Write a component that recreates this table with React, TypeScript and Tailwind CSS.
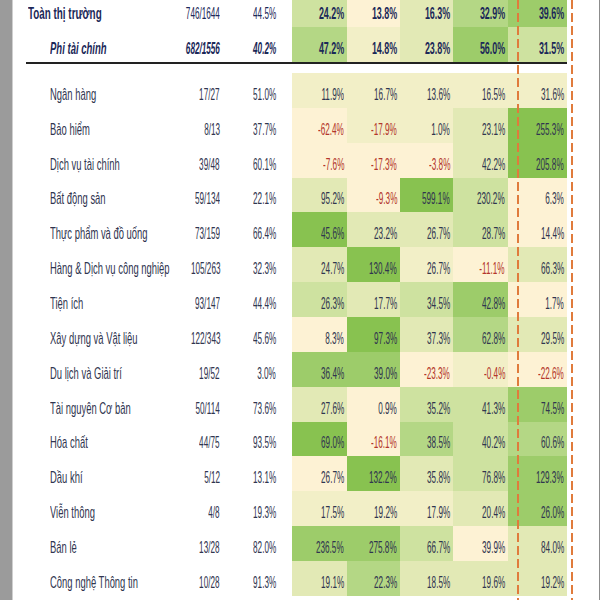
import React from "react";

// green heat-map shades, lightest to darkest
const shade = [
  "bg-[#fdf2d4]",
  "bg-[#f2efc7]",
  "bg-[#e2e9b5]",
  "bg-[#cee2a0]",
  "bg-[#b4d785]",
  "bg-[#9dcc6a]",
  "bg-[#88c250]",
];

type Cell = [string, number];
type Row = { name: string; count: string; pct: string; cells: Cell[] };

const cols = "grid grid-cols-[167px_40px_56px_16px_55px_53px_53px_55px_59px]";

const rows: Row[] = [
  { name: "Ngân hàng", count: "17/27", pct: "51.0%", cells: [["11.9%", 1], ["16.7%", 1], ["13.6%", 1], ["16.5%", 1], ["31.6%", 1]] },
  { name: "Bảo hiểm", count: "8/13", pct: "37.7%", cells: [["-62.4%", 0], ["-17.9%", 1], ["1.0%", 1], ["23.1%", 2], ["255.3%", 6]] },
  { name: "Dịch vụ tài chính", count: "39/48", pct: "60.1%", cells: [["-7.6%", 0], ["-17.3%", 0], ["-3.8%", 0], ["42.2%", 2], ["205.8%", 6]] },
  { name: "Bất động sản", count: "59/134", pct: "22.1%", cells: [["95.2%", 2], ["-9.3%", 0], ["599.1%", 6], ["230.2%", 3], ["6.3%", 0]] },
  { name: "Thực phẩm và đồ uống", count: "73/159", pct: "66.4%", cells: [["45.6%", 6], ["23.2%", 2], ["26.7%", 2], ["28.7%", 3], ["14.4%", 0]] },
  { name: "Hàng & Dịch vụ công nghiệp", count: "105/263", pct: "32.3%", cells: [["24.7%", 2], ["130.4%", 6], ["26.7%", 1], ["-11.1%", 0], ["66.3%", 2]] },
  { name: "Tiện ích", count: "93/147", pct: "44.4%", cells: [["26.3%", 3], ["17.7%", 2], ["34.5%", 3], ["42.8%", 5], ["1.7%", 0]] },
  { name: "Xây dựng và Vật liệu", count: "122/343", pct: "45.6%", cells: [["8.3%", 0], ["97.3%", 6], ["37.3%", 2], ["62.8%", 4], ["29.5%", 2]] },
  { name: "Du lịch và Giải trí", count: "19/52", pct: "3.0%", cells: [["36.4%", 5], ["39.0%", 5], ["-23.3%", 0], ["-0.4%", 1], ["-22.6%", 0]] },
  { name: "Tài nguyên Cơ bản", count: "50/114", pct: "73.6%", cells: [["27.6%", 2], ["0.9%", 0], ["35.2%", 3], ["41.3%", 3], ["74.5%", 5]] },
  { name: "Hóa chất", count: "44/75", pct: "93.5%", cells: [["69.0%", 6], ["-16.1%", 0], ["38.5%", 4], ["40.2%", 3], ["60.6%", 4]] },
  { name: "Dầu khí", count: "5/12", pct: "13.1%", cells: [["26.7%", 0], ["132.2%", 6], ["35.8%", 2], ["76.8%", 3], ["129.3%", 5]] },
  { name: "Viễn thông", count: "4/8", pct: "19.3%", cells: [["17.5%", 1], ["19.2%", 1], ["17.9%", 1], ["20.4%", 2], ["26.0%", 5]] },
  { name: "Bán lẻ", count: "13/28", pct: "82.0%", cells: [["236.5%", 5], ["275.8%", 5], ["66.7%", 3], ["39.9%", 0], ["84.0%", 2]] },
  { name: "Công nghệ Thông tin", count: "10/28", pct: "91.3%", cells: [["19.1%", 2], ["22.3%", 4], ["18.5%", 2], ["19.6%", 2], ["19.2%", 2]] },
];

// Excel-style: text sits on the bottom of each cell
const cellBase = "flex items-end pb-[5px] whitespace-nowrap";

function Num({ children, className = "" }: { children: React.ReactNode; className?: string }) {
  return (
    <div className={`${cellBase} justify-end`}>
      <span className={`inline-block origin-right scale-x-[0.48] leading-[16px] ${className}`}>{children}</span>
    </div>
  );
}

function HeaderRow({ name, count, pct, cells, italic }: Row & { italic?: boolean }) {
  return (
    <div className={`${cols} h-[35px] text-[#1b2858]`}>
      <div className={`${cellBase} ${italic ? "pl-[37px]" : "pl-[15px]"}`}>
        <span
          className={`inline-block origin-left leading-[16px] text-[17px] font-bold ${
            italic ? "italic scale-x-[0.56]" : "scale-x-[0.58]"
          }`}
        >
          {name}
        </span>
      </div>
      <Num className={`text-[17px] ${italic ? "italic font-semibold" : ""}`}>{count}</Num>
      <Num className={`text-[17px] ${italic ? "italic font-semibold" : ""}`}>{pct}</Num>
      <div />
      {cells.map(([v, l], i) => (
        <div key={i} className={`${cellBase} justify-end pr-[3px] ${shade[l]}`}>
          <span className="inline-block origin-right scale-x-[0.525] leading-[16px] text-[17px] font-bold">{v}</span>
        </div>
      ))}
    </div>
  );
}

function SectorRow({ row }: { row: Row }) {
  return (
    <div className={`${cols} h-[34.86px] text-[17px] text-[#30354f]`}>
      <div className={`${cellBase} pl-[37px]`}>
        <span className="inline-block origin-left scale-x-[0.555] leading-[16px]">{row.name}</span>
      </div>
      <Num>{row.count}</Num>
      <Num>{row.pct}</Num>
      <div />
      {row.cells.map(([v, l], i) => (
        <div key={i} className={`${cellBase} justify-end pr-[3px] ${shade[l]}`}>
          <span
            className={`inline-block origin-right scale-x-[0.48] leading-[16px] ${
              v.startsWith("-") ? "text-[#b3362a]" : ""
            }`}
          >
            {v}
          </span>
        </div>
      ))}
    </div>
  );
}

export default function App() {
  return (
    <div
      className="flex h-[600px] w-[600px] overflow-hidden bg-white"
      style={{ fontFamily: '"Liberation Sans", Arial, sans-serif' }}
    >
      <div className="w-[12px] shrink-0 bg-[#9b9b9b]" />
      <div className="w-[1px] shrink-0 bg-[#cfcfcf]" />

      <div className="relative flex-1">
        <div className="-mt-[8px]">
          <HeaderRow
            name="Toàn thị trường"
            count="746/1644"
            pct="44.5%"
            cells={[["24.2%", 3], ["13.8%", 0], ["16.3%", 2], ["32.9%", 4], ["39.6%", 5]]}
          />
          <HeaderRow
            italic
            name="Phi tài chính"
            count="682/1556"
            pct="40.2%"
            cells={[["47.2%", 4], ["14.8%", 1], ["23.8%", 2], ["56.0%", 5], ["31.5%", 3]]}
          />
          <div className="ml-[13px] h-[2px] w-[541px] bg-[#222]" />
          <div className="h-[9px]" />
          {rows.map((r) => (
            <SectorRow key={r.name} row={r} />
          ))}
        </div>

        {/* dashed orange guides */}
        <div className="absolute top-0 bottom-0 left-[504px] w-[2px] bg-[repeating-linear-gradient(to_bottom,#e07b3c_0_9px,transparent_9px_13px)]" />
        <div className="absolute top-0 bottom-0 left-[558px] w-[2px] bg-[repeating-linear-gradient(to_bottom,#e07b3c_0_9px,transparent_9px_13px)]" />
      </div>

      <div className="w-[1px] shrink-0 bg-[#8c8c8c]" />
    </div>
  );
}
